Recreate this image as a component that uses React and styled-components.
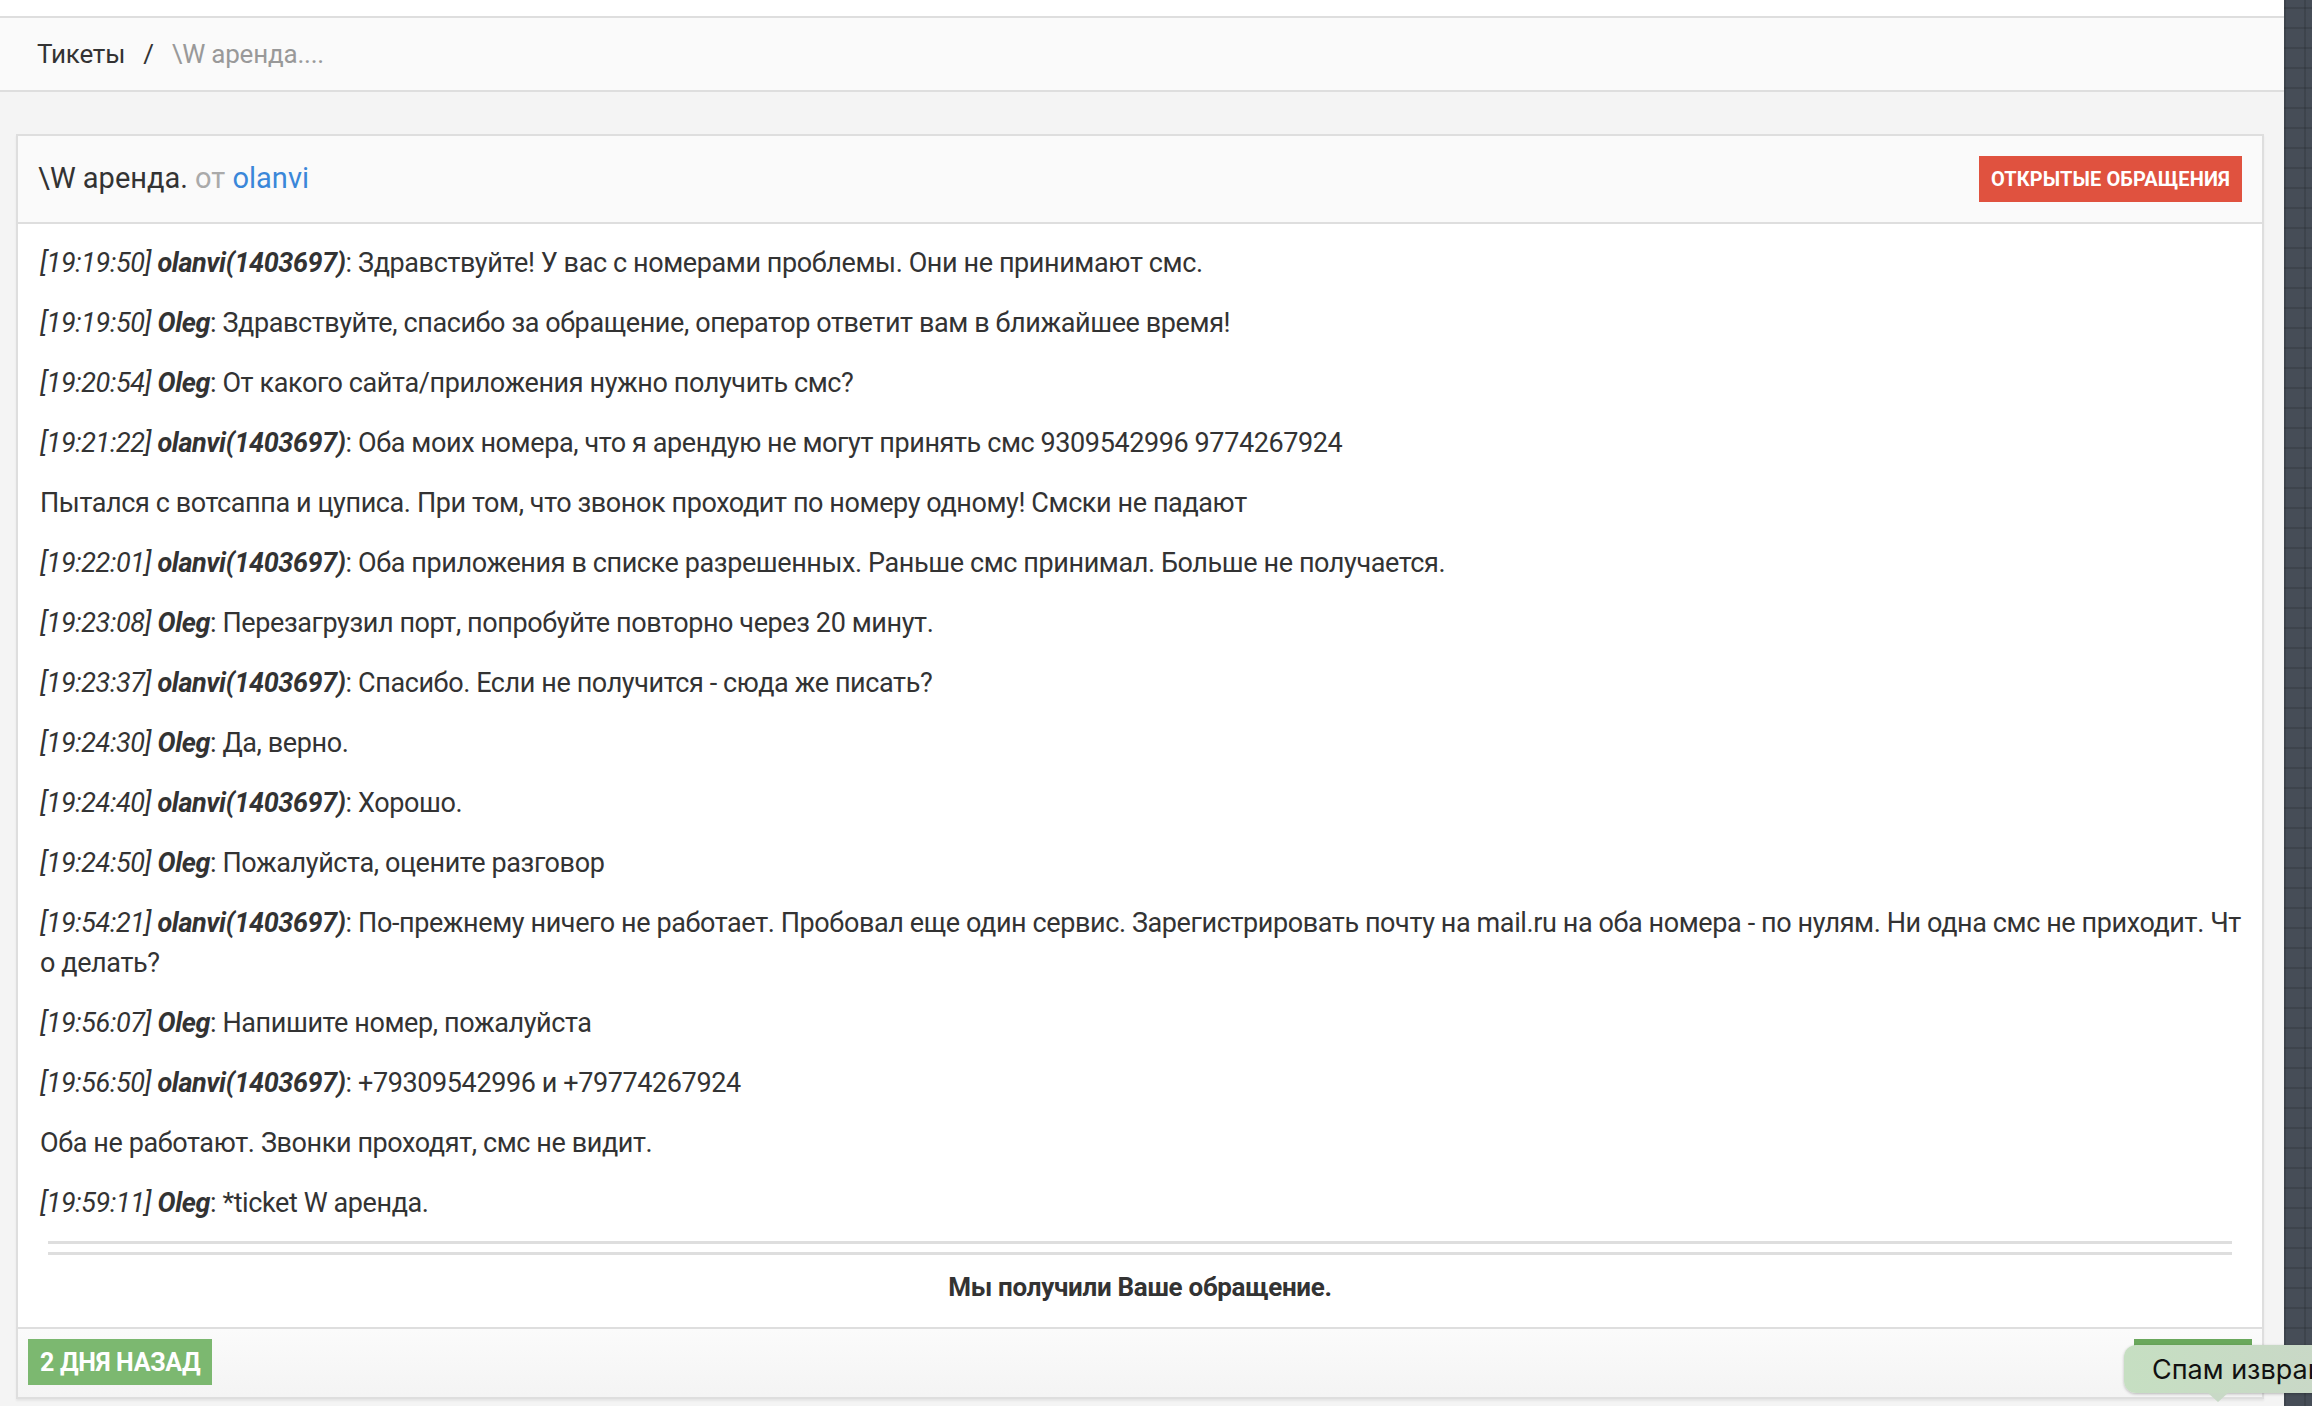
import styled, { createGlobalStyle } from "styled-components"

const GlobalStyle = createGlobalStyle`
  html, body {
    margin: 0;
    padding: 0;
    background: #f4f4f4;
    font-family: Roboto, "Noto Sans", sans-serif;
    color: #333;
  }
`

const Page = styled.div`
  display: flex;
  min-height: 1406px;
  overflow: hidden;
`

const Main = styled.div`
  flex: 1;
  display: flex;
  flex-direction: column;
  background: #f4f4f4;
`

const TopBar = styled.div`
  height: 16px;
  background: #fff;
  border-bottom: 2px solid #dedede;
`

const Breadcrumbs = styled.div`
  height: 72px;
  display: flex;
  align-items: center;
  padding-left: 37px;
  background: #fafafa;
  border-bottom: 2px solid #dedede;
  font-size: 26px;
  letter-spacing: -0.2px;
`

const Crumb = styled.span`
  color: ${props => (props.muted ? "#999" : "#333")};
`

const Sep = styled.span`
  color: #333;
  margin: 0 18px 0 18px;
`

const Content = styled.div`
  padding: 42px 20px 10px 16px;
`

const Panel = styled.div`
  background: #fff;
  border: 2px solid #dedede;
  box-shadow: 0 2px 2px rgba(0, 0, 0, 0.06);
`

const PanelHeader = styled.div`
  height: 86px;
  display: flex;
  align-items: center;
  justify-content: space-between;
  padding: 0 20px 0 20px;
  background: #fafafa;
  border-bottom: 2px solid #dedede;
`

const Title = styled.div`
  font-size: 29px;
  color: #333;
  margin-top: -2px;
`

const From = styled.span`
  color: #aaa;
`

const UserLink = styled.a`
  color: #3a87d9;
  text-decoration: none;
`

const LabelButton = styled.div`
  height: 46px;
  padding: 0 12px;
  display: flex;
  align-items: center;
  background: ${props => props.bg};
  color: #fff;
  font-weight: 700;
  font-size: ${props => props.size || 20}px;
  text-transform: uppercase;
  letter-spacing: ${props => props.spacing || 0}px;
  align-self: ${props => props.align || "center"};
  margin-top: ${props => props.top || 0}px;
`

const Messages = styled.div`
  padding: 19px 20px 0 22px;
`

const Line = styled.p`
  margin: 0 0 20px 0;
  font-size: 27px;
  letter-spacing: -0.4px;
  line-height: 40px;
  color: #333;
  word-break: break-all;
`

const Time = styled.i``

const Author = styled.b`
  font-style: italic;
`

const Rule = styled.div`
  margin: -2px 30px 0 30px;
  height: 8px;
  border-top: 3px solid #dedede;
  border-bottom: 3px solid #dedede;
`

const Notice = styled.div`
  height: 64px;
  padding-bottom: 8px;
  display: flex;
  align-items: center;
  justify-content: center;
  font-weight: 700;
  font-size: 26px;
  letter-spacing: -0.3px;
  color: #333;
`

const PanelFooter = styled.div`
  height: 68px;
  display: flex;
  align-items: flex-start;
  justify-content: space-between;
  padding: 0 10px 0 10px;
  background: linear-gradient(#fbfbfb, #f4f4f4);
  border-top: 2px solid #dedede;
`

const SpamButton = styled.div`
  position: relative;
  width: 118px;
  height: 46px;
  margin-top: 10px;
  background: #6aa85c;
`

const Tooltip = styled.div`
  position: absolute;
  left: -10px;
  top: 6px;
  height: 48px;
  width: 300px;
  padding-left: 28px;
  display: flex;
  align-items: center;
  background: linear-gradient(90deg, #c6dfc2, #c9d8c7 60%, #cfd3d4);
  border-radius: 12px 0 0 12px;
  box-shadow: 0 1px 3px rgba(0, 0, 0, 0.25);
  font-family: Inter, "Noto Sans", sans-serif;
  font-size: 27px;
  color: #111;
  white-space: nowrap;
  z-index: 2;

  &::after {
    content: "";
    position: absolute;
    left: 84px;
    bottom: -9px;
    border-left: 10px solid transparent;
    border-right: 10px solid transparent;
    border-top: 9px solid #c8d9c6;
  }
`

const Strip = styled.div`
  width: 28px;
  flex-shrink: 0;
  background-color: #464d57;
  background-image:
    repeating-linear-gradient(0deg, rgba(0, 0, 0, 0.12) 0 2px, transparent 2px 20px),
    repeating-linear-gradient(90deg, rgba(0, 0, 0, 0.12) 0 2px, transparent 2px 20px);
`

const messages = [
  { time: "19:19:50", author: "olanvi(1403697)", text: "Здравствуйте! У вас с номерами проблемы. Они не принимают смс." },
  { time: "19:19:50", author: "Oleg", text: "Здравствуйте, спасибо за обращение, оператор ответит вам в ближайшее время!" },
  { time: "19:20:54", author: "Oleg", text: "От какого сайта/приложения нужно получить смс?" },
  { time: "19:21:22", author: "olanvi(1403697)", text: "Оба моих номера, что я арендую не могут принять смс 9309542996 9774267924" },
  { text: "Пытался с вотсаппа и цуписа. При том, что звонок проходит по номеру одному! Смски не падают" },
  { time: "19:22:01", author: "olanvi(1403697)", text: "Оба приложения в списке разрешенных. Раньше смс принимал. Больше не получается." },
  { time: "19:23:08", author: "Oleg", text: "Перезагрузил порт, попробуйте повторно через 20 минут." },
  { time: "19:23:37", author: "olanvi(1403697)", text: "Спасибо. Если не получится - сюда же писать?" },
  { time: "19:24:30", author: "Oleg", text: "Да, верно." },
  { time: "19:24:40", author: "olanvi(1403697)", text: "Хорошо." },
  { time: "19:24:50", author: "Oleg", text: "Пожалуйста, оцените разговор" },
  { time: "19:54:21", author: "olanvi(1403697)", text: "По-прежнему ничего не работает. Пробовал еще один сервис. Зарегистрировать почту на mail.ru на оба номера - по нулям. Ни одна смс не приходит. Что делать?" },
  { time: "19:56:07", author: "Oleg", text: "Напишите номер, пожалуйста" },
  { time: "19:56:50", author: "olanvi(1403697)", text: "+79309542996 и +79774267924" },
  { text: "Оба не работают. Звонки проходят, смс не видит." },
  { time: "19:59:11", author: "Oleg", text: "*ticket W аренда." },
]

const App = () => {
  return (
    <Page>
      <GlobalStyle />
      <Main>
        <TopBar />
        <Breadcrumbs>
          <Crumb>Тикеты</Crumb>
          <Sep>/</Sep>
          <Crumb muted>\W аренда....</Crumb>
        </Breadcrumbs>
        <Content>
          <Panel>
            <PanelHeader>
              <Title>
                \W аренда. <From>от</From> <UserLink href="#">olanvi</UserLink>
              </Title>
              <LabelButton bg="#e0523f" size={20} spacing={0.1}>Открытые обращения</LabelButton>
            </PanelHeader>
            <Messages>
              {messages.map((m, i) => (
                <Line key={i}>
                  {m.time && <Time>[{m.time}]</Time>} {m.author && <Author>{m.author}</Author>}
                  {m.author ? ": " : ""}
                  {m.text}
                </Line>
              ))}
            </Messages>
            <Rule />
            <Notice>Мы получили Ваше обращение.</Notice>
            <PanelFooter>
              <LabelButton bg="#7cb870" size={25} spacing={-0.3} align="flex-start" top={10}>2 дня назад</LabelButton>
              <SpamButton>
                <Tooltip>Спам извращения</Tooltip>
              </SpamButton>
            </PanelFooter>
          </Panel>
        </Content>
      </Main>
      <Strip />
    </Page>
  )
}

export default App
